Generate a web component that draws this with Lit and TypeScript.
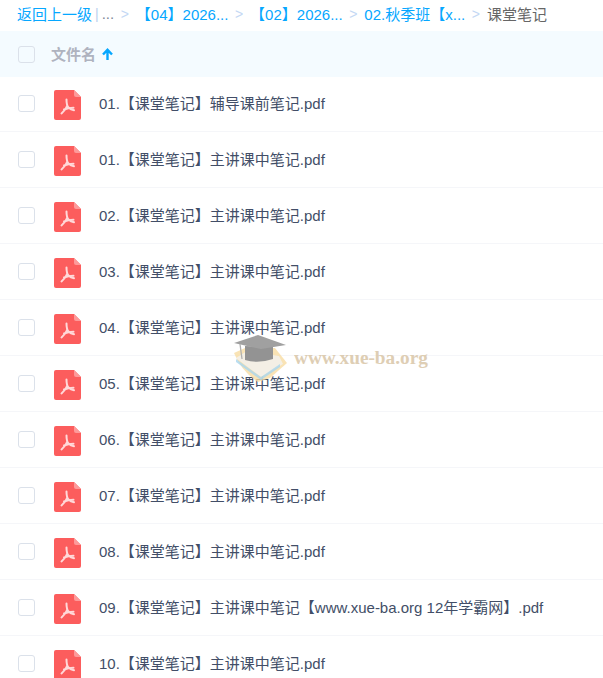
import { LitElement, html, css, svg } from "lit";
import { customElement } from "lit/decorators.js";

const files = [
  "01.【课堂笔记】辅导课前笔记.pdf",
  "01.【课堂笔记】主讲课中笔记.pdf",
  "02.【课堂笔记】主讲课中笔记.pdf",
  "03.【课堂笔记】主讲课中笔记.pdf",
  "04.【课堂笔记】主讲课中笔记.pdf",
  "05.【课堂笔记】主讲课中笔记.pdf",
  "06.【课堂笔记】主讲课中笔记.pdf",
  "07.【课堂笔记】主讲课中笔记.pdf",
  "08.【课堂笔记】主讲课中笔记.pdf",
  "09.【课堂笔记】主讲课中笔记【www.xue-ba.org 12年学霸网】.pdf",
  "10.【课堂笔记】主讲课中笔记.pdf",
];

const pdfIcon = html`<svg class="pdf" width="27" height="30" viewBox="0 0 27 30">
  <path d="M2 0H20L27 7V28a2 2 0 0 1-2 2H2a2 2 0 0 1-2-2V2a2 2 0 0 1 2-2Z" fill="#fc5d5d"/>
  <path d="M20 0L27 7H22a2 2 0 0 1-2-2Z" fill="#fd9a9a"/>
  <path d="M12.5 9.5C12.5 13 12.5 15.5 14.5 17.5C16 19 18.5 20 20 20.2M13.3 15.5C12 19 10 21.5 7.5 23.5M10 19.5C13 18.3 16.5 17.8 19.5 17.8" fill="none" stroke="#ffd9d9" stroke-width="2" stroke-linecap="round" stroke-linejoin="round"/>
</svg>`;

const cap = svg`
  <path d="M1 19 L12 14 H42 L54 29 L37 44 L25 48 Q8 37 1 19Z" fill="#f8dca2" opacity="0.8"/>
  <path d="M3 24 L14 17 L46 22 L50 30 L28 43Z" fill="#f1f3f5" opacity="0.75"/>
  <path d="M3 25 L28 43 L47 30 L47 33 L28 46 L3 28Z" fill="#a9d6ee" opacity="0.8"/>
  <path d="M12 12 V26 Q25 30 40 25 V13Z" fill="#939393"/>
  <path d="M1 9 L25 1 L53 11 L28 15Z" fill="#a0a0a0"/>
  <path d="M7 10 L9 25" stroke="#b0b0b0" stroke-width="1.3" fill="none"/>
`;

@customElement("app-root")
export class AppRoot extends LitElement {
  static styles = css`
    :host {
      display: block;
      position: relative;
      width: 603px;
      height: 678px;
      overflow: hidden;
      background: #fff;
      font-family: "Liberation Sans", "Noto Sans CJK SC", sans-serif;
      font-size: 15px;
      color: #424e67;
    }
    .crumbs {
      height: 31px;
      box-sizing: border-box;
      padding: 0 0 4px 17px;
      display: flex;
      align-items: center;
      white-space: nowrap;
      color: #06a7ff;
    }
    .bar { color: #b9cfee; margin: 0 3px; font-size: 14px; }
    .dots { color: #818999; }
    .sep { color: #c4d8f4; margin: 0 7px 0 6.5px; font-size: 14px; }
    .cur { color: #666; }
    .head {
      height: 46px;
      margin-bottom: -1px;
      box-sizing: border-box;
      background: #f4fbff;
      display: flex;
      align-items: center;
      padding: 1px 0 0 18px;
      color: #afb3bf;
      font-size: 15px;
      font-weight: 700;
    }
    .check {
      width: 17px;
      height: 17px;
      box-sizing: border-box;
      border: 1px solid #dbe1ea;
      border-radius: 3px;
      background: #fff;
      flex: none;
    }
    .head .check { background: transparent; margin-right: 16px; }
    .head .label { margin-bottom: 3px; }
    .arrow { margin-left: 6px; display: block; margin-bottom: 1px; }
    .row {
      height: 56px;
      box-sizing: border-box;
      display: flex;
      align-items: center;
      padding-left: 18px;
      border-bottom: 1px solid #f5f6f9;
      white-space: nowrap;
    }
    .row .check { margin-right: 19px; }
    .pdf { flex: none; margin: 3px 18px 0 0; }
    .name { margin-bottom: 2px; }
    .mark {
      position: absolute;
      left: 233px;
      top: 334px;
      display: flex;
      align-items: flex-start;
      pointer-events: none;
    }
    .mark-text {
      font-family: "Liberation Serif", serif;
      font-weight: 700;
      font-size: 19.3px;
      line-height: 22px;
      color: #dbc9ac;
      margin: 13px 0 0 7px;
      opacity: 0.9;
    }
  `;

  render() {
    return html`
      <div class="crumbs">
        <span>返回上一级</span><span class="bar">|</span><span class="dots">...</span>
        <span class="sep">&gt;</span><span>【04】2026...</span>
        <span class="sep">&gt;</span><span>【02】2026...</span>
        <span class="sep">&gt;</span><span>02.秋季班【x...</span>
        <span class="sep">&gt;</span><span class="cur">课堂笔记</span>
      </div>
      <div class="head">
        <span class="check"></span>
        <span class="label">文件名</span>
        <svg class="arrow" width="11" height="12" viewBox="0 0 11 12">
          <path d="M5.5 12V2.5M1 6.5L5.5 1.8L10 6.5" fill="none" stroke="#06a7ff" stroke-width="2.4"/>
        </svg>
      </div>
      ${files.map(
        (f) => html`<div class="row">
          <span class="check"></span>
          ${pdfIcon}
          <span class="name">${f}</span>
        </div>`
      )}
      <div class="mark">
        <svg width="54" height="52" viewBox="0 0 54 52">${cap}</svg>
        <span class="mark-text">www.xue-ba.org</span>
      </div>
    `;
  }
}
